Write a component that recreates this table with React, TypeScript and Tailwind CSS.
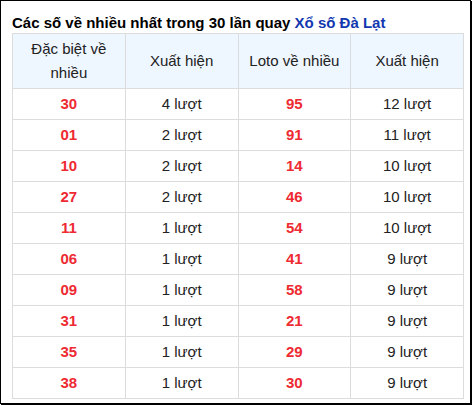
const rows = [
  ["30", "4 lượt", "95", "12 lượt"],
  ["01", "2 lượt", "91", "11 lượt"],
  ["10", "2 lượt", "14", "10 lượt"],
  ["27", "2 lượt", "46", "10 lượt"],
  ["11", "1 lượt", "54", "10 lượt"],
  ["06", "1 lượt", "41", "9 lượt"],
  ["09", "1 lượt", "58", "9 lượt"],
  ["31", "1 lượt", "21", "9 lượt"],
  ["35", "1 lượt", "29", "9 lượt"],
  ["38", "1 lượt", "30", "9 lượt"],
];

export default function App() {
  return (
    <div className="w-[472px] h-[405px] bg-white font-['Liberation_Sans',Arial,sans-serif]">
      <div className="w-[471px] h-[404px] border border-black shadow-[1px_1px_0_#000] px-[11px] pt-[12px]">
        <h2 className="text-[15px] font-bold leading-[20px] text-black">
          Các số về nhiều nhất trong 30 lần quay{" "}
          <span className="text-[#1238b0]">Xổ số Đà Lạt</span>
        </h2>
        <table className="w-[452px] border-collapse table-fixed text-[15px] text-[#222]">
          <thead>
            <tr className="bg-[#eef6ff]">
              <th className="border border-[#dcdcdc] font-normal leading-6 py-[3px] px-2">
                Đặc biệt về nhiều
              </th>
              <th className="border border-[#dcdcdc] font-normal leading-6 py-[3px]">Xuất hiện</th>
              <th className="border border-[#dcdcdc] font-normal leading-6 py-[3px]">Loto về nhiều</th>
              <th className="border border-[#dcdcdc] font-normal leading-6 py-[3px]">Xuất hiện</th>
            </tr>
          </thead>
          <tbody>
            {rows.map((r, i) => (
              <tr key={i}>
                <td className="border border-[#dcdcdc] text-center leading-6 py-[3px] font-bold text-[#ee2a32]">{r[0]}</td>
                <td className="border border-[#dcdcdc] text-center leading-6 py-[3px]">{r[1]}</td>
                <td className="border border-[#dcdcdc] text-center leading-6 py-[3px] font-bold text-[#ee2a32]">{r[2]}</td>
                <td className="border border-[#dcdcdc] text-center leading-6 py-[3px]">{r[3]}</td>
              </tr>
            ))}
          </tbody>
        </table>
      </div>
    </div>
  );
}
